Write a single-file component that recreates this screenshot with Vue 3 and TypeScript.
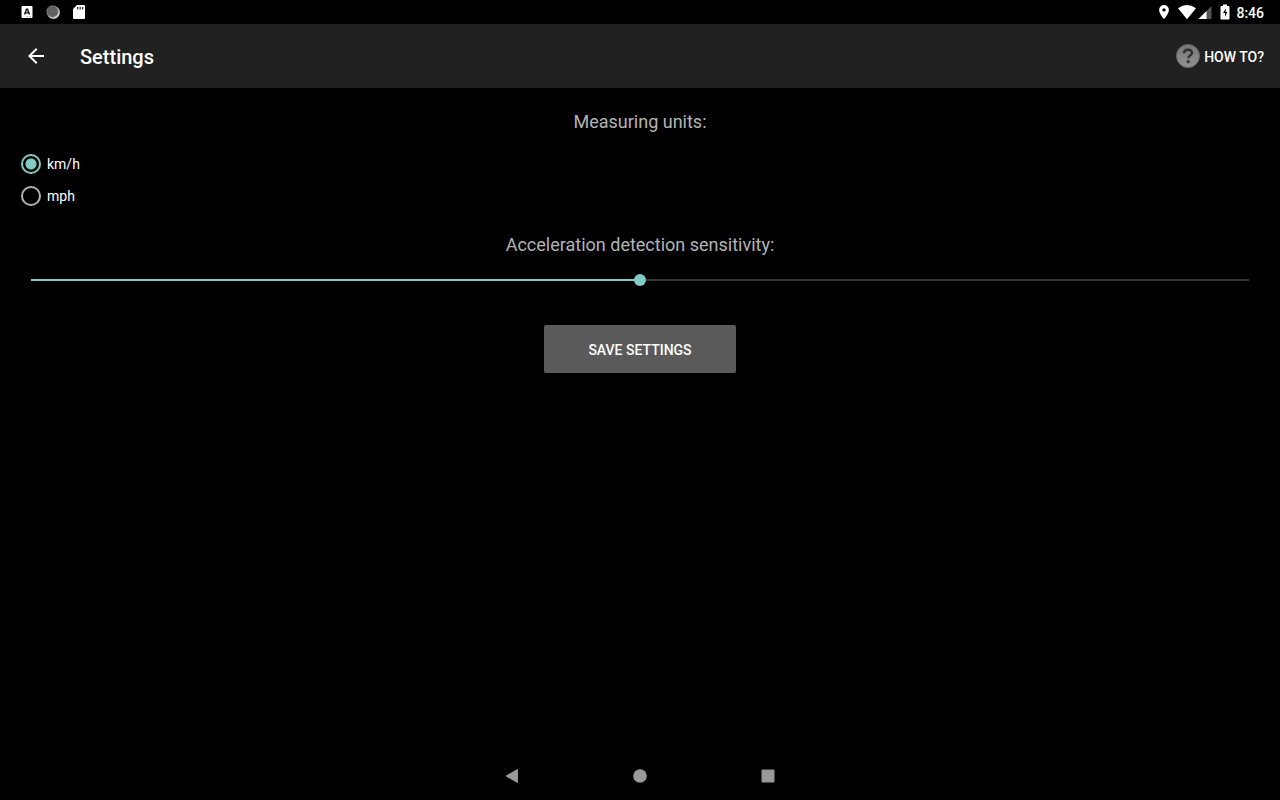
<script setup lang="ts">
import { computed, ref } from 'vue'

type Unit = 'km/h' | 'mph'

const units: Unit[] = ['km/h', 'mph']
const unit = ref<Unit>('km/h')
const sensitivity = ref<number>(50)
const fill = computed(() => ({ '--fill': `${sensitivity.value}%` }))
</script>

<template>
  <div class="screen">
    <div class="status">
      <div class="notices">
        <svg width="14" height="16" viewBox="0 0 14 16" aria-hidden="true">
          <rect x="1.5" y="2" width="11" height="12" rx="1" fill="#fff" />
          <path d="M4.5 10.5 6.5 5.2h1l2 5.300M5.400 8.900h3.200" fill="none" stroke="#111" stroke-width="1.4" />
          <path d="M6.500 12.600h1.500M9 12.600h2" stroke="#999" stroke-width="0.7" />
        </svg>
        <svg width="14" height="16" viewBox="0 0 14 16" aria-hidden="true">
          <circle cx="7.400" cy="8.400" r="6.400" fill="#ddd" />
          <circle cx="6.500" cy="7.500" r="5.800" fill="#606060" />
          <circle cx="6.500" cy="7.500" r="5.600" fill="none" stroke="#888" stroke-width="1.200" stroke-dasharray="1 1" />
        </svg>
        <svg width="14" height="16" viewBox="0 0 14 16" aria-hidden="true">
          <path d="M5 1h7a1 1 0 0 1 1 1v12a1 1 0 0 1-1 1H2a1 1 0 0 1-1-1V5z" fill="#fff" />
          <path d="M5.700 3v2.400M8.200 3v2.400M10.700 3v2.400" stroke="#222" stroke-width="1.200" />
        </svg>
      </div>
      <div class="system">
        <svg width="12" height="16" viewBox="0 0 12 16" aria-hidden="true">
          <path d="M6 1a4.900 4.900 0 0 0-4.900 4.900C1.100 9.500 6 15 6 15s4.900-5.500 4.900-9.100A4.900 4.900 0 0 0 6 1zm0 3.200a1.700 1.700 0 1 1 0 3.400 1.700 1.700 0 0 1 0-3.400z" fill="#fff" />
        </svg>
        <svg class="wifi" width="18" height="16" viewBox="0 0 18 16" aria-hidden="true">
          <path d="M0 4.200Q9-2.200 18 4.200L9 15.200z" fill="#fff" />
        </svg>
        <svg class="signal" width="14" height="16" viewBox="0 0 14 16" aria-hidden="true">
          <path d="M0.500 15 13.500 2v13z" fill="#555" />
          <path d="M0.500 15 8.500 7v8z" fill="#fff" />
        </svg>
        <svg class="battery" width="10" height="16" viewBox="0 0 10 16" aria-hidden="true">
          <path d="M3 0.500h4V2h1.500a1 1 0 0 1 1 1v11.500a1 1 0 0 1-1 1h-7a1 1 0 0 1-1-1V3a1 1 0 0 1 1-1H3z" fill="#fff" />
          <path d="M6 4.200 3 9h2v4L7.200 8H5.500z" fill="#000" />
        </svg>
        <span class="time">8:46</span>
      </div>
    </div>

    <header class="toolbar">
      <button class="back" type="button" aria-label="Back">
        <svg width="24" height="24" viewBox="0 0 24 24" aria-hidden="true">
          <path d="M20 11H7.830l5.590-5.590L12 4l-8 8 8 8 1.410-1.410L7.830 13H20z" fill="#fff" />
        </svg>
      </button>
      <h1>Settings</h1>
      <button class="help" type="button">
        <svg width="24" height="24" viewBox="0 0 24 24" aria-hidden="true">
          <defs>
            <linearGradient id="help-disc" x1="0" y1="0" x2="0" y2="1">
              <stop offset="0" stop-color="#757575" />
              <stop offset="1" stop-color="#929292" />
            </linearGradient>
          </defs>
          <circle cx="12" cy="12" r="11.500" fill="url(#help-disc)" stroke="#686868" />
          <path d="M8 9.200c.2-4.500 8-4.500 8-.4 0 2.900-3.700 2.700-3.700 5.400" fill="none" stroke="#303030" stroke-width="2.400" />
          <circle cx="12.200" cy="17.700" r="1.600" fill="#303030" />
        </svg>
        <span>HOW TO?</span>
      </button>
    </header>

    <main>
      <h2 id="units-title">Measuring units:</h2>
      <div class="units" role="radiogroup" aria-labelledby="units-title">
        <label v-for="item in units" :key="item">
          <input v-model="unit" type="radio" name="unit" :value="item" />
          <span>{{ item }}</span>
        </label>
      </div>
      <h2><label for="sensitivity">Acceleration detection sensitivity:</label></h2>
      <input id="sensitivity" v-model.number="sensitivity" class="slider" type="range" min="0" max="100" :style="fill" />
      <button class="save" type="button">SAVE SETTINGS</button>
    </main>

    <nav aria-label="System navigation">
      <button type="button" aria-label="Back">
        <svg width="16" height="16" viewBox="0 0 16 16" aria-hidden="true">
          <path d="M2.500 7.300 13 1.300q1-.4 1 .6v12.200q0 1-1 .6L2.500 8.700q-1-.7 0-1.400z" fill="#999" />
        </svg>
      </button>
      <button type="button" aria-label="Home">
        <svg width="16" height="16" viewBox="0 0 16 16" aria-hidden="true">
          <circle cx="8" cy="8" r="6.800" fill="#999" />
        </svg>
      </button>
      <button type="button" aria-label="Recent apps">
        <svg width="16" height="16" viewBox="0 0 16 16" aria-hidden="true">
          <rect x="1.500" y="1.500" width="13" height="13" rx="1" fill="#999" />
        </svg>
      </button>
    </nav>
  </div>
</template>

<style>
body {
  background: #000;
}
</style>

<style scoped>
.screen {
  display: flex;
  flex-direction: column;
  min-height: 100vh;
  background: #000;
  color: #fff;
  font-family: Roboto, "Liberation Sans", sans-serif;
  font-size: 14px;
}

.screen * {
  box-sizing: border-box;
}

svg {
  display: block;
  flex: none;
}

button {
  margin: 0;
  padding: 0;
  border: 0;
  background: none;
  color: inherit;
  font: inherit;
  cursor: pointer;
}

.status {
  display: flex;
  align-items: center;
  justify-content: space-between;
  height: 24px;
  padding: 0 16px 0 20px;
}

.notices {
  display: flex;
  gap: 12px;
}

.system {
  display: flex;
  align-items: center;
}

.wifi {
  margin-left: 8px;
}

.signal {
  margin-left: 2px;
}

.battery {
  margin-left: 8px;
}

.time {
  margin-left: 6px;
  padding-top: 1px;
  font-weight: 500;
  line-height: 20px;
}

.toolbar {
  display: flex;
  align-items: center;
  height: 64px;
  padding: 0 16px 0 24px;
  background: #212121;
}

h1 {
  flex: 1;
  margin: 0 0 0 32px;
  padding-top: 2px;
  font-size: 20px;
  font-weight: 500;
  line-height: 24px;
}

.help {
  display: flex;
  align-items: center;
  gap: 4px;
  font-weight: 500;
}

.help span {
  padding-top: 2px;
}

main {
  display: flex;
  flex: 1;
  flex-direction: column;
  padding: 21px 15px;
}

h2 {
  margin: 0;
  color: #b3b3b3;
  font-size: 18px;
  font-weight: 400;
  line-height: 26px;
  text-align: center;
}

.units {
  display: flex;
  flex-direction: column;
  align-items: flex-start;
  margin: 13px 0 20px;
}

.units label {
  display: flex;
  align-items: center;
  gap: 6px;
  height: 32px;
  padding-left: 6px;
  cursor: pointer;
}

.units input {
  appearance: none;
  width: 20px;
  height: 20px;
  margin: 0;
  border: 2px solid #b3b3b3;
  border-radius: 50%;
}

.units input:checked {
  border-color: #80cbc4;
  background: radial-gradient(circle, #80cbc4 5px, transparent 6px);
}

.slider {
  appearance: none;
  height: 32px;
  margin: 6px 16px 0;
  background: none;
}

.slider::-webkit-slider-runnable-track {
  height: 2px;
  background: linear-gradient(to right, #80cbc4 var(--fill), #333 var(--fill));
}

.slider::-webkit-slider-thumb {
  appearance: none;
  width: 12px;
  height: 12px;
  margin-top: -5px;
  border-radius: 50%;
  background: #80cbc4;
}

.save {
  align-self: center;
  width: 192px;
  height: 48px;
  margin-top: 29px;
  padding-top: 2px;
  border-radius: 2px;
  background: #5a5a5b;
  font-weight: 500;
}

nav {
  display: flex;
  justify-content: center;
  gap: 80px;
  height: 48px;
}

nav button {
  display: flex;
  align-items: center;
  justify-content: center;
  width: 48px;
}
</style>
